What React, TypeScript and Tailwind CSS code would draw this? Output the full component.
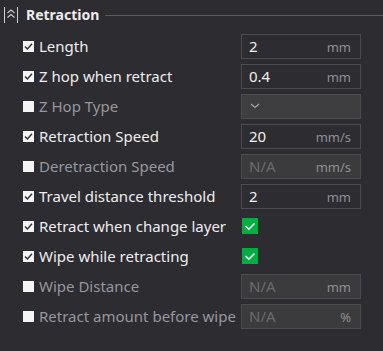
import React from "react";

type Row =
  | { kind: "input"; label: string; enabled: boolean; value: string; unit: string }
  | { kind: "select"; label: string; enabled: boolean }
  | { kind: "check"; label: string; enabled: boolean };

const rows: Row[] = [
  { kind: "input", label: "Length", enabled: true, value: "2", unit: "mm" },
  { kind: "input", label: "Z hop when retract", enabled: true, value: "0.4", unit: "mm" },
  { kind: "select", label: "Z Hop Type", enabled: false },
  { kind: "input", label: "Retraction Speed", enabled: true, value: "20", unit: "mm/s" },
  { kind: "input", label: "Deretraction Speed", enabled: false, value: "N/A", unit: "mm/s" },
  { kind: "input", label: "Travel distance threshold", enabled: true, value: "2", unit: "mm" },
  { kind: "check", label: "Retract when change layer", enabled: true },
  { kind: "check", label: "Wipe while retracting", enabled: true },
  { kind: "input", label: "Wipe Distance", enabled: false, value: "N/A", unit: "mm" },
  { kind: "input", label: "Retract amount before wipe", enabled: false, value: "N/A", unit: "%" },
];

function SmallCheck({ checked }: { checked: boolean }) {
  return (
    <div className="w-[11px] h-[11px] bg-[#f4f4f4] flex items-center justify-center shrink-0">
      {checked && (
        <svg width="9" height="9" viewBox="0 0 9 9">
          <path d="M1 4.6 L3.4 7 L8 1.8" fill="none" stroke="#2d2c31" strokeWidth="1.4" />
        </svg>
      )}
    </div>
  );
}

export default function App() {
  return (
    <div
      className="w-[383px] h-[351px] bg-[#2d2c31] overflow-hidden"
      style={{ fontFamily: '"Noto Sans", "Open Sans", sans-serif' }}
    >
      <div className="h-[30px] flex items-center pl-[4px]">
        <svg width="14" height="16" viewBox="0 0 14 16" className="shrink-0">
          <path d="M0.5 0 V16 M13.5 0 V16" stroke="#cfcfcf" strokeWidth="1" />
          <path d="M3.5 6 L7 3 L10.5 6 M3.5 10.5 L7 7.5 L10.5 10.5" fill="none" stroke="#cfcfcf" strokeWidth="1.1" />
        </svg>
        <span className="ml-[8px] text-[14px] font-bold text-[#ececec] leading-none">Retraction</span>
        <div className="flex-1 h-px bg-[#5b5b60] ml-[6px]" />
      </div>
      <div className="flex flex-col pt-[1px]">
        {rows.map((r, i) => (
          <div key={i} className="h-[30px] flex items-center">
            <div className="w-[241px] flex items-center pl-[23px] shrink-0">
              <SmallCheck checked={r.enabled} />
              <span
                className={`ml-[5px] text-[15px] leading-none whitespace-nowrap ${
                  r.enabled ? "text-[#ededed]" : "text-[#97979c]"
                }`}
              >
                {r.label}
              </span>
            </div>
            {r.kind === "input" && (
              <div
                className={`w-[120px] h-[25px] border border-[#4c4c50] flex items-center pl-[7px] pr-[9px] ${
                  r.enabled ? "bg-[#2d2c31]" : "bg-[#3b3b3e]"
                }`}
              >
                <span
                  className={`text-[15px] leading-none flex-1 ${
                    r.enabled ? "text-[#f0f0f0]" : "text-[#6a6a6e]"
                  }`}
                >
                  {r.value}
                </span>
                <span className="text-[13px] leading-none text-[#8e8e92] mt-[2px]">{r.unit}</span>
              </div>
            )}
            {r.kind === "select" && (
              <div className="w-[120px] h-[25px] border border-[#4c4c50] bg-[#3e3e41] flex items-center pl-[8px]">
                <svg width="10" height="6" viewBox="0 0 10 6">
                  <path d="M1 1 L5 4.5 L9 1" fill="none" stroke="#a8a8ac" strokeWidth="1.1" />
                </svg>
              </div>
            )}
            {r.kind === "check" && (
              <div className="w-[16px] h-[16px] bg-[#00ae42] flex items-center justify-center ml-[1px]">
                <svg width="12" height="9" viewBox="0 0 12 9">
                  <path d="M1.5 4 L4.8 7.2 L10.5 1.5" fill="none" stroke="#ffffff" strokeWidth="1.5" />
                </svg>
              </div>
            )}
          </div>
        ))}
      </div>
    </div>
  );
}
